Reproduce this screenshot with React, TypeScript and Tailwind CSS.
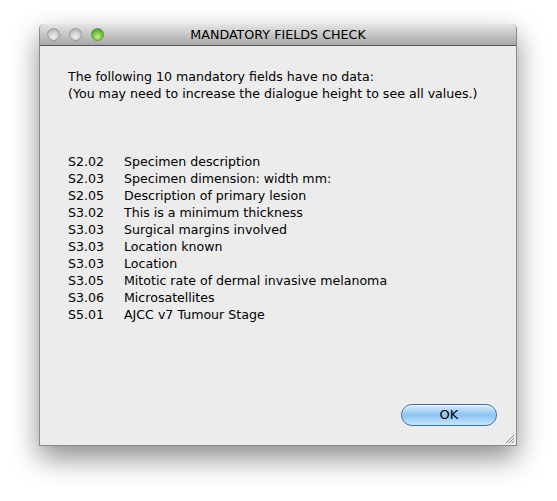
const fields = [
  ['S2.02', 'Specimen description'],
  ['S2.03', 'Specimen dimension: width mm:'],
  ['S2.05', 'Description of primary lesion'],
  ['S3.02', 'This is a minimum thickness'],
  ['S3.03', 'Surgical margins involved'],
  ['S3.03', 'Location known'],
  ['S3.03', 'Location'],
  ['S3.05', 'Mitotic rate of dermal invasive melanoma'],
  ['S3.06', 'Microsatellites'],
  ['S5.01', 'AJCC v7 Tumour Stage'],
];

const Light = ({ green }: { green?: boolean }) => (
  <div
    className={
      green
        ? 'w-[13px] h-[13px] rounded-full border border-[#5d9a3a] bg-[radial-gradient(circle_at_50%_70%,#c8f08a,#6cbf38_55%,#3f8a1e)]'
        : 'w-[13px] h-[13px] rounded-full border border-[#9a9a9a] bg-[radial-gradient(circle_at_50%_70%,#f2f2f2,#c9c9c9_55%,#a9a9a9)]'
    }
  />
);

export default function App() {
  return (
    <div
      className="w-[557px] h-[501px] bg-white pt-[24px] pl-[39px]"
      style={{ fontFamily: '"DejaVu Sans", "Lucida Grande", sans-serif' }}
    >
      <div className="w-[478px] h-[422px] flex flex-col bg-[#ececec] border-x border-b border-[#8a8a8a] shadow-[0_12px_28px_rgba(0,0,0,0.45)] rounded-t-[5px] relative">
        {/* title bar */}
        <div className="h-[22px] flex items-center relative rounded-t-[5px] bg-gradient-to-b from-[#e6e6e6] to-[#a7a7a7] border-b border-[#555]">
          <div className="flex gap-[9px] pl-[7px]">
            <Light />
            <Light />
            <Light green />
          </div>
          <div className="absolute inset-0 flex items-center justify-center text-[12.7px] text-black">
            MANDATORY FIELDS CHECK
          </div>
        </div>

        <div className="flex-1 flex flex-col pl-[28px] pt-[22px] text-[12.6px] leading-[17px] text-black">
          <div>The following 10 mandatory fields have no data:</div>
          <div>(You may need to increase the dialogue height to see all values.)</div>
          <div className="h-[51px]" />
          {fields.map(([code, label], i) => (
            <div key={i} className="flex">
              <span className="w-[56px]">{code}</span>
              <span>{label}</span>
            </div>
          ))}
        </div>

        <div className="flex justify-end pr-[19px] pb-[19px]">
          <button className="w-[96px] h-[22px] rounded-full border border-[#3d6fa8] bg-gradient-to-b from-[#d6ebfb] via-[#8cc4f2] to-[#c7e8fd] text-[13px] text-black shadow-[inset_0_1px_1px_rgba(255,255,255,0.8)]">
            OK
          </button>
        </div>

        <svg className="absolute right-[1px] bottom-[1px]" width="11" height="11" viewBox="0 0 11 11">
          <path d="M10 2 L2 10 M10 5 L5 10 M10 8 L8 10" stroke="#8a8a8a" strokeWidth="1" />
        </svg>
      </div>
    </div>
  );
}
